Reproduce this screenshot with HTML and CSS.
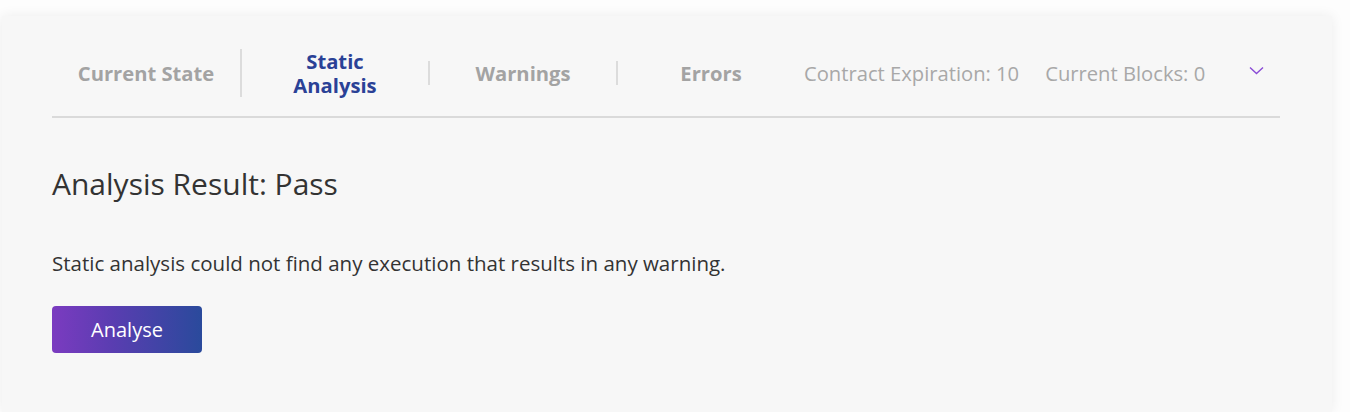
FILE: index.html
```html
<!DOCTYPE html>
<html>
<head>
<meta charset="utf-8">
<link rel="stylesheet" href="styles.css">
</head>
<body>
<div class="card">
  <nav class="tabs">
    <div class="tab">Current State</div>
    <div class="tab active">Static<br>Analysis</div>
    <div class="tab">Warnings</div>
    <div class="tab">Errors</div>
    <div class="meta">Contract Expiration: 10</div>
    <div class="meta">Current Blocks: 0</div>
    <div class="toggle">
      <svg width="15" height="9" viewBox="0 0 15 9"><path d="M1 1.5 L7.5 7.5 L14 1.5" fill="none" stroke="#8a4bd6" stroke-width="1.4"/></svg>
    </div>
  </nav>
  <section class="content">
    <h2 class="title">Analysis Result: Pass</h2>
    <p class="desc">Static analysis could not find any execution that results in any warning.</p>
    <button class="btn">Analyse</button>
  </section>
</div>
</body>
</html>
```
FILE: styles.css
```css
html, body {
  margin: 0;
  padding: 0;
  background: #fdfdfd;
}
body {
  padding: 16px 18px 0 2px;
  font-family: "Open Sans", "Noto Sans", sans-serif;
  height: 412px;
  box-sizing: border-box;
  overflow: hidden;
}
.card {
  background: #f7f7f7;
  box-shadow: 0 0 12px rgba(0, 0, 0, 0.07);
  height: 396px;
  padding: 33px 52px 0 48px;
  box-sizing: border-box;
}
.tabs {
  display: flex;
  align-items: center;
  border-bottom: 2px solid #dadada;
  padding-bottom: 19px;
  margin-left: 2px;
}
.tab {
  width: 188px;
  flex: none;
  text-align: center;
  font-weight: 700;
  font-size: 20.2px;
  line-height: 24px;
  color: #a3a3a3;
  box-sizing: border-box;
}
.tab + .tab {
  border-left: 2px solid #dcdcdc;
}
.tab.active {
  color: #2a4196;
}
.meta {
  font-size: 20.2px;
  line-height: 24px;
  color: #a8a8a8;
  margin-right: 26px;
  white-space: nowrap;
}
.toggle {
  margin-left: auto;
  padding-right: 16px;
  display: flex;
  align-items: center;
  height: 24px;
}
.toggle svg {
  display: block;
  margin-top: -5px;
}
.content {
  padding: 46px 0 0 2px;
}
.title {
  margin: 0;
  font-weight: 400;
  font-size: 30px;
  line-height: 40px;
  color: #333;
}
.desc {
  margin: 45px 0 0;
  font-size: 20.5px;
  line-height: 28px;
  color: #333;
}
.btn {
  display: block;
  margin-top: 29px;
  width: 150px;
  height: 47px;
  border: none;
  border-radius: 4px;
  background: linear-gradient(90deg, #7b3bc0 0%, #5a3db1 40%, #2a4a9c 100%);
  color: #fff;
  font-family: "Open Sans", "Noto Sans", sans-serif;
  font-size: 20px;
  padding: 0;
}
```
